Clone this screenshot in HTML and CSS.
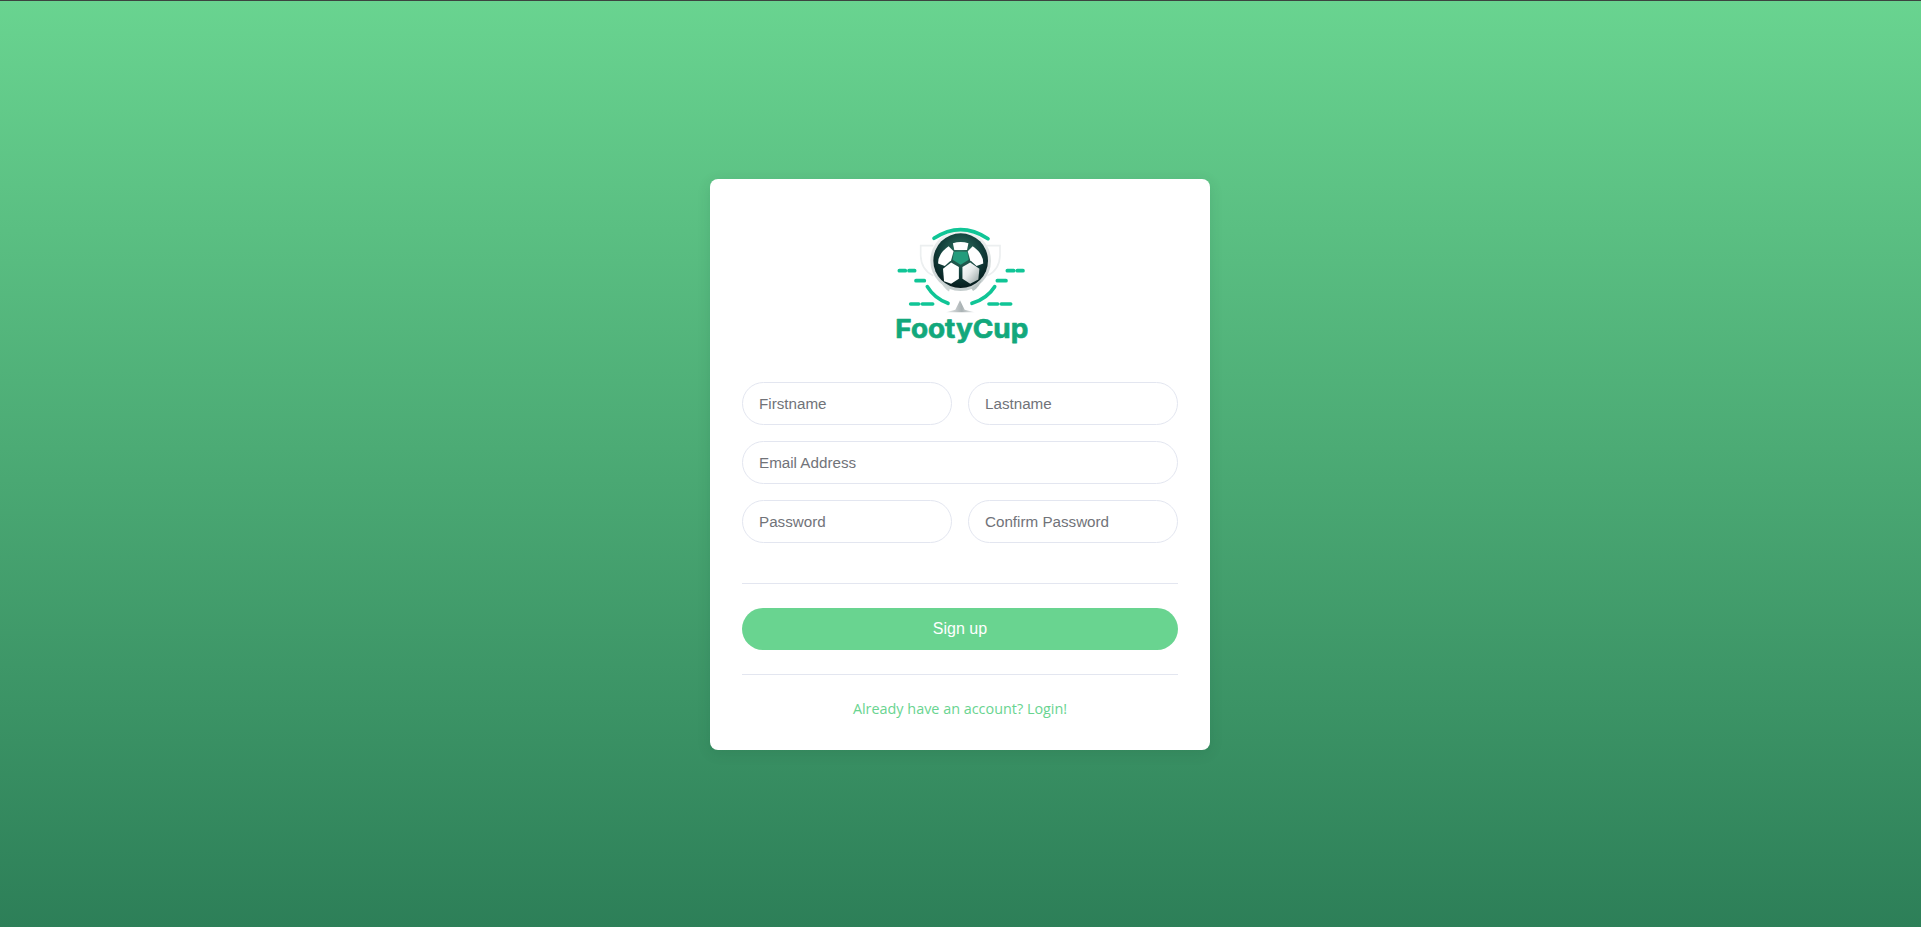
FILE: index.html
```html
<!DOCTYPE html>
<html lang="en">
<head>
<meta charset="utf-8">
<title>FootyCup - Sign up</title>
<link rel="stylesheet" href="styles.css">
</head>
<body>
<main class="card">
  <svg class="logo" viewBox="0 0 480 420" role="img" aria-label="FootyCup">
    <defs>
      <radialGradient id="ballDark" cx="50%" cy="35%" r="70%">
        <stop offset="0" stop-color="#2f7763"/>
        <stop offset="0.55" stop-color="#123f3b"/>
        <stop offset="1" stop-color="#051517"/>
      </radialGradient>
      <linearGradient id="panelRight" x1="0" y1="0" x2="1" y2="1">
        <stop offset="0" stop-color="#ffffff"/>
        <stop offset="0.45" stop-color="#e6eaea"/>
        <stop offset="1" stop-color="#93a1a0"/>
      </linearGradient>
      <linearGradient id="base" x1="0" y1="0" x2="1" y2="0">
        <stop offset="0" stop-color="#eef0f0"/>
        <stop offset="0.55" stop-color="#aab2b4"/>
        <stop offset="1" stop-color="#f0f2f2"/>
      </linearGradient>
      <linearGradient id="rim" x1="0" y1="0" x2="0" y2="1">
        <stop offset="0" stop-color="#f1f3f3"/>
        <stop offset="1" stop-color="#c3cccc"/>
      </linearGradient>
    </defs>
    <g class="trophy">
      <path d="M160 92H122V122Q124 165 160 182"/>
      <path d="M320 92H360V122Q358 165 322 182"/>
    </g>
    <path d="M240 256L226 284 198 292H284L254 284Z" fill="url(#base)"/>
    <g transform="translate(2 0)">
      <circle cx="240" cy="137" r="91" fill="url(#rim)"/>
      <circle cx="240" cy="137" r="82" fill="url(#ballDark)"/>
      <g class="panels" transform="translate(240 137) scale(1.06) translate(-240 -137)">
        <path d="M218 88Q240 80 262 88L258 107H222Z"/>
        <path d="M206 96L220 110 213 136 195 152 176 145Q176 116 206 96Z"/>
        <path d="M274 96L260 110 267 136 285 152 304 145Q304 116 274 96Z"/>
        <path d="M213 142L235 155V188L213 202 193 195 190 160Z"/>
        <path class="panel-shaded" d="M267 142L245 155V188L267 202 290 190 293 160Z"/>
        <path class="panel-soft" d="M183 195L210 215 207 224Q192 215 183 195Z"/>
        <path class="panel-dim" d="M300 190L270 215 275 223Q293 212 300 190Z"/>
      </g>
      <path class="panel-green" d="M220 110H260L264 134 240 149 216 134Z"/>
    </g>
    <g class="accents">
      <path d="M162 70Q242 17 324 71"/>
      <path d="M142 215Q163 250 204 265"/>
      <path d="M344 215Q322 250 276 265"/>
      <path d="M58 167H76M87 167H104M108 197H133M92 267H116M127 267H158"/>
      <path d="M382 167H401M412 167H429M352 197H378M327 267H353M364 267H392"/>
    </g>
    <text class="wordmark" x="46" y="369" textLength="399" lengthAdjust="spacingAndGlyphs">FootyCup</text>
  </svg>

  <form class="form">
    <div class="row">
      <input class="field" type="text" placeholder="Firstname">
      <input class="field" type="text" placeholder="Lastname">
    </div>
    <input class="field" type="email" placeholder="Email Address">
    <div class="row">
      <input class="field" type="password" placeholder="Password">
      <input class="field" type="password" placeholder="Confirm Password">
    </div>
  </form>

  <hr class="rule rule-first">
  <button class="submit" type="button">Sign up</button>
  <hr class="rule rule-second">
  <a class="login" href="#">Already have an account? Login!</a>
</main>
</body>
</html>
```
FILE: styles.css
```css
* {
  box-sizing: border-box;
}

html,
body {
  height: 100%;
}

body {
  margin: 0;
  padding: 2px 1px 0 0;
  display: flex;
  align-items: center;
  justify-content: center;
  background:
    linear-gradient(#3c4340 0 1px, transparent 1px),
    linear-gradient(180deg, #69d490 0%, #2d7f58 100%);
}

.card {
  width: 500px;
  height: 571px;
  padding: 36px 32px 30px;
  display: flex;
  flex-direction: column;
  align-items: stretch;
  background: #fff;
  border-radius: 8px;
  box-shadow: 0 3px 14px rgba(20, 60, 40, 0.12);
}

.logo {
  display: block;
  flex: none;
  width: 160px;
  height: 140px;
  margin: 0 auto 27px;
}

.trophy path {
  fill: none;
  stroke: #eceff0;
  stroke-width: 5;
}

.panels path {
  fill: #fff;
}

.panels .panel-shaded {
  fill: url(#panelRight);
}

.panels .panel-soft {
  fill: #cfd6d5;
}

.panels .panel-dim {
  fill: #b9c3c2;
}

.panel-green {
  fill: #239c7c;
}

.accents path {
  fill: none;
  stroke: #10c596;
  stroke-width: 11;
  stroke-linecap: round;
}

.wordmark {
  font-family: "Inter", "Liberation Sans", sans-serif;
  font-size: 78px;
  font-weight: 700;
  fill: #12a87c;
  stroke: #12a87c;
  stroke-width: 2;
  stroke-linejoin: round;
}

.form {
  display: flex;
  flex-direction: column;
  gap: 16px;
}

.row {
  display: grid;
  grid-template-columns: 1fr 1fr;
  gap: 16px;
}

.field {
  width: 100%;
  height: 43px;
  padding: 0 16px;
  border: 1px solid #e3e6f0;
  border-radius: 22px;
  background: #fff;
  font-family: "Liberation Sans", Arial, sans-serif;
  font-size: 15.2px;
  color: #717379;
  outline: none;
}

.field::placeholder {
  color: #717379;
  opacity: 1;
}

.rule {
  flex: none;
  width: 100%;
  height: 1px;
  margin: 0;
  border: 0;
  background: #e3e6f0;
}

.rule-first {
  margin-top: 40px;
  margin-bottom: 24px;
}

.rule-second {
  margin-top: 24px;
  margin-bottom: 23px;
}

.submit {
  flex: none;
  height: 42px;
  border: 0;
  border-radius: 21px;
  background: #69d490;
  color: #fff;
  font-family: "Liberation Sans", Arial, sans-serif;
  font-size: 16px;
  cursor: pointer;
}

.login {
  display: block;
  font-family: "Open Sans", sans-serif;
  font-size: 14.4px;
  line-height: 21px;
  text-align: center;
  color: #69d490;
  text-decoration: none;
}
```
